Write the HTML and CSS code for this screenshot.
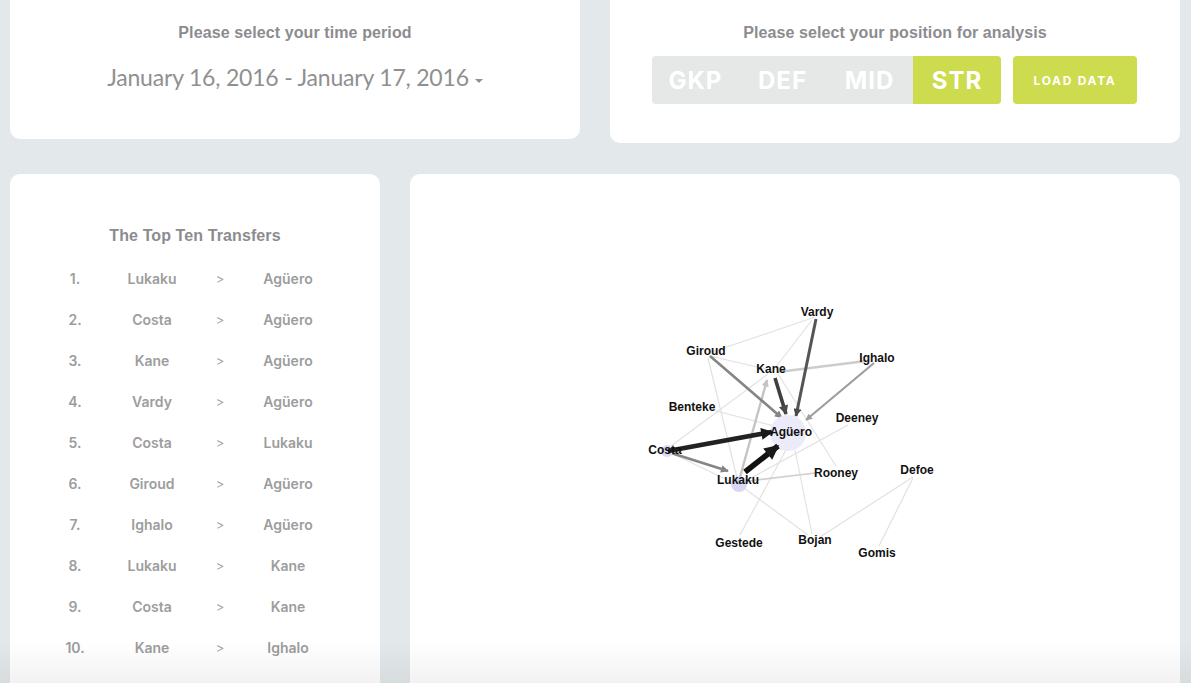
FILE: index.html
```html
<!DOCTYPE html>
<html>
<head>
<meta charset="utf-8">
<link rel="stylesheet" href="styles.css">
</head>
<body>
<div class="page">
  <div class="row row-top">
    <section class="card card-period">
      <h2 class="card-title">Please select your time period</h2>
      <div class="date-range">January 16, 2016 - January 17, 2016<span class="caret"></span></div>
    </section>
    <section class="card card-position">
      <h2 class="card-title">Please select your position for analysis</h2>
      <div class="controls">
        <div class="segmented">
          <span class="seg">GKP</span>
          <span class="seg">DEF</span>
          <span class="seg">MID</span>
          <span class="seg seg-active">STR</span>
        </div>
        <button class="load-btn">LOAD DATA</button>
      </div>
    </section>
  </div>
  <div class="row row-main">
    <section class="card card-list">
      <h2 class="card-title list-title">The Top Ten Transfers</h2>
      <div class="transfers">
        <span class="num">1.</span><span class="name">Lukaku</span><span class="sep">&gt;</span><span class="name">Agüero</span>
        <span class="num">2.</span><span class="name">Costa</span><span class="sep">&gt;</span><span class="name">Agüero</span>
        <span class="num">3.</span><span class="name">Kane</span><span class="sep">&gt;</span><span class="name">Agüero</span>
        <span class="num">4.</span><span class="name">Vardy</span><span class="sep">&gt;</span><span class="name">Agüero</span>
        <span class="num">5.</span><span class="name">Costa</span><span class="sep">&gt;</span><span class="name">Lukaku</span>
        <span class="num">6.</span><span class="name">Giroud</span><span class="sep">&gt;</span><span class="name">Agüero</span>
        <span class="num">7.</span><span class="name">Ighalo</span><span class="sep">&gt;</span><span class="name">Agüero</span>
        <span class="num">8.</span><span class="name">Lukaku</span><span class="sep">&gt;</span><span class="name">Kane</span>
        <span class="num">9.</span><span class="name">Costa</span><span class="sep">&gt;</span><span class="name">Kane</span>
        <span class="num">10.</span><span class="name">Kane</span><span class="sep">&gt;</span><span class="name">Ighalo</span>
      </div>
    </section>
    <section class="card card-graph">
      <svg class="graph" width="770" height="520" viewBox="0 0 770 520">
        <defs>
          <marker id="a-black" viewBox="0 0 10 10" refX="9" refY="5" markerWidth="3" markerHeight="2.6" orient="auto"><path d="M0,0 L10,5 L0,10 z" fill="#1a1a1a"/></marker>
          <marker id="a-dark" viewBox="0 0 10 10" refX="9" refY="5" markerWidth="3.4" markerHeight="2.6" orient="auto"><path d="M0,0 L10,5 L0,10 z" fill="#4a4a4a"/></marker>
          <marker id="a-mid" viewBox="0 0 10 10" refX="9" refY="5" markerWidth="3.4" markerHeight="3" orient="auto"><path d="M0,0 L10,5 L0,10 z" fill="#858585"/></marker>
          <marker id="a-light" viewBox="0 0 10 10" refX="9" refY="5" markerWidth="3.4" markerHeight="3" orient="auto"><path d="M0,0 L10,5 L0,10 z" fill="#9e9e9e"/></marker>
          <marker id="a-pale" viewBox="0 0 10 10" refX="9" refY="5" markerWidth="3" markerHeight="3" orient="auto"><path d="M0,0 L10,5 L0,10 z" fill="#c4c4c4"/></marker>
        </defs>
        <g transform="translate(-410,-174)">
          <g class="thin">
            <line x1="815" y1="317" x2="712" y2="352"/>
            <line x1="812" y1="320" x2="772" y2="372"/>
            <line x1="710" y1="356" x2="770" y2="370"/>
            <line x1="708" y1="358" x2="738" y2="482"/>
            <line x1="667" y1="449" x2="768" y2="374"/>
            <line x1="712" y1="410" x2="782" y2="428"/>
            <line x1="778" y1="374" x2="836" y2="466"/>
            <line x1="848" y1="425" x2="740" y2="484"/>
            <line x1="786" y1="450" x2="740" y2="535"/>
            <line x1="795" y1="450" x2="812" y2="534"/>
            <line x1="744" y1="488" x2="808" y2="535"/>
            <line x1="820" y1="537" x2="913" y2="477"/>
            <line x1="913" y1="478" x2="879" y2="546"/>
            <line x1="667" y1="451" x2="740" y2="486"/>
          </g>
          <line x1="740" y1="482" x2="815" y2="473" stroke="#cfcfcf" stroke-width="1.6"/>
          <line x1="778" y1="372" x2="866" y2="361" stroke="#cccccc" stroke-width="2.4"/>
          <line x1="740" y1="477" x2="767" y2="380" stroke="#c4c4c4" stroke-width="2.4" marker-end="url(#a-pale)"/>
          <line x1="710" y1="356" x2="782" y2="418" stroke="#858585" stroke-width="2.6" marker-end="url(#a-mid)"/>
          <line x1="874" y1="363" x2="806" y2="420" stroke="#9e9e9e" stroke-width="2.2" marker-end="url(#a-light)"/>
          <line x1="668" y1="452" x2="728" y2="471" stroke="#858585" stroke-width="2.6" marker-end="url(#a-mid)"/>
          <line x1="816" y1="319" x2="796" y2="416" stroke="#555555" stroke-width="3" marker-end="url(#a-dark)"/>
          <line x1="775" y1="378" x2="786" y2="414" stroke="#3f3f3f" stroke-width="3.6" marker-end="url(#a-dark)"/>
          <circle cx="788" cy="433" r="18" fill="#ebebfa"/>
          <circle cx="667" cy="451" r="6" fill="#dcdcf5"/>
          <circle cx="739" cy="484" r="8" fill="#d7d7f3"/>
          <line x1="668" y1="451" x2="772" y2="432" stroke="#222222" stroke-width="4.6" marker-end="url(#a-black)"/>
          <line x1="745" y1="472" x2="778" y2="446" stroke="#111111" stroke-width="5.6" marker-end="url(#a-black)"/>
          <g class="labels">
            <text x="817" y="316">Vardy</text>
            <text x="706" y="355">Giroud</text>
            <text x="877" y="362">Ighalo</text>
            <text x="771" y="373">Kane</text>
            <text x="692" y="411">Benteke</text>
            <text x="857" y="422">Deeney</text>
            <text x="791" y="436">Agüero</text>
            <text x="665" y="454">Costa</text>
            <text x="738" y="484">Lukaku</text>
            <text x="836" y="477">Rooney</text>
            <text x="917" y="474">Defoe</text>
            <text x="739" y="547">Gestede</text>
            <text x="815" y="544">Bojan</text>
            <text x="877" y="557">Gomis</text>
          </g>
        </g>
      </svg>
    </section>
  </div>
</div>
<div class="bottom-fade"></div>
</body>
</html>
```

FILE: styles.css
```css
html, body {
  margin: 0;
  padding: 0;
  background: #e3e8ea;
  overflow: hidden;
  height: 683px;
}

.page {
  padding: 0 11px 0 10px;
  font-family: "Liberation Sans", Arial, sans-serif;
}

.row {
  display: grid;
  column-gap: 30px;
  align-items: start;
}

.row-top {
  grid-template-columns: 570px 570px;
}

.row-main {
  grid-template-columns: 370px 770px;
  margin-top: 31px;
}

.card {
  background: #ffffff;
  border-radius: 10px;
}

.row-top .card {
  border-radius: 0 0 10px 10px;
  text-align: center;
}

.card-title {
  margin: 0;
  font-size: 16px;
  font-weight: 700;
  color: #8c8c90;
  line-height: 20px;
  letter-spacing: 0.1px;
}

.card-period {
  height: 139px;
  padding-top: 23px;
  box-sizing: border-box;
}

.date-range {
  margin-top: 19px;
  font-family: Lato, sans-serif;
  font-weight: 400;
  font-size: 23px;
  line-height: 30px;
  color: #909090;
  letter-spacing: -0.2px;
}

.caret {
  display: inline-block;
  width: 0;
  height: 0;
  margin-left: 6px;
  vertical-align: middle;
  border-left: 4px solid transparent;
  border-right: 4px solid transparent;
  border-top: 4px solid #909090;
  position: relative;
  top: 1px;
}

.card-position {
  height: 143px;
  padding-top: 23px;
  box-sizing: border-box;
}

.controls {
  display: flex;
  justify-content: center;
  gap: 12px;
  margin-top: 13px;
  margin-left: -1px;
}

.segmented {
  display: flex;
  width: 349px;
  height: 48px;
  background: #e6e7e7;
  border-radius: 4px;
  overflow: hidden;
}

.seg {
  flex: 1;
  display: flex;
  align-items: center;
  justify-content: center;
  color: #ffffff;
  font-family: Inter, sans-serif;
  font-weight: 700;
  font-size: 24px;
  letter-spacing: 1px;
}

.seg-active {
  background: #cddb4f;
  flex: 0 0 88px;
}

.load-btn {
  width: 124px;
  height: 48px;
  border: none;
  border-radius: 4px;
  background: #cddb4f;
  color: #ffffff;
  font-family: Inter, sans-serif;
  font-weight: 700;
  font-size: 12px;
  letter-spacing: 1.7px;
  padding: 0;
}

.card-list {
  height: 560px;
  padding-top: 52px;
  box-sizing: border-box;
  text-align: center;
}

.transfers {
  display: grid;
  grid-template-columns: 50px 104px 32px 104px;
  grid-auto-rows: 41px;
  justify-content: center;
  margin-top: 12px;
  font-family: Inter, sans-serif;
  font-weight: 600;
  font-size: 14px;
  color: #9d9d9d;
}

.transfers span {
  display: flex;
  align-items: center;
  justify-content: center;
}

.transfers .sep {
  font-weight: 400;
  font-size: 13px;
  color: #a4a4a4;
}

.card-graph {
  height: 560px;
  overflow: hidden;
}

.graph {
  display: block;
}

.thin line {
  stroke: #e2e2e2;
  stroke-width: 1.2;
}

.labels text {
  font-family: "Liberation Sans", Arial, sans-serif;
  font-weight: 700;
  font-size: 12px;
  fill: #111111;
  text-anchor: middle;
}

.bottom-fade {
  position: fixed;
  left: 0;
  right: 0;
  bottom: 0;
  height: 42px;
  background: linear-gradient(to bottom, rgba(0,0,0,0), rgba(0,0,0,0.05));
  pointer-events: none;
}
```
